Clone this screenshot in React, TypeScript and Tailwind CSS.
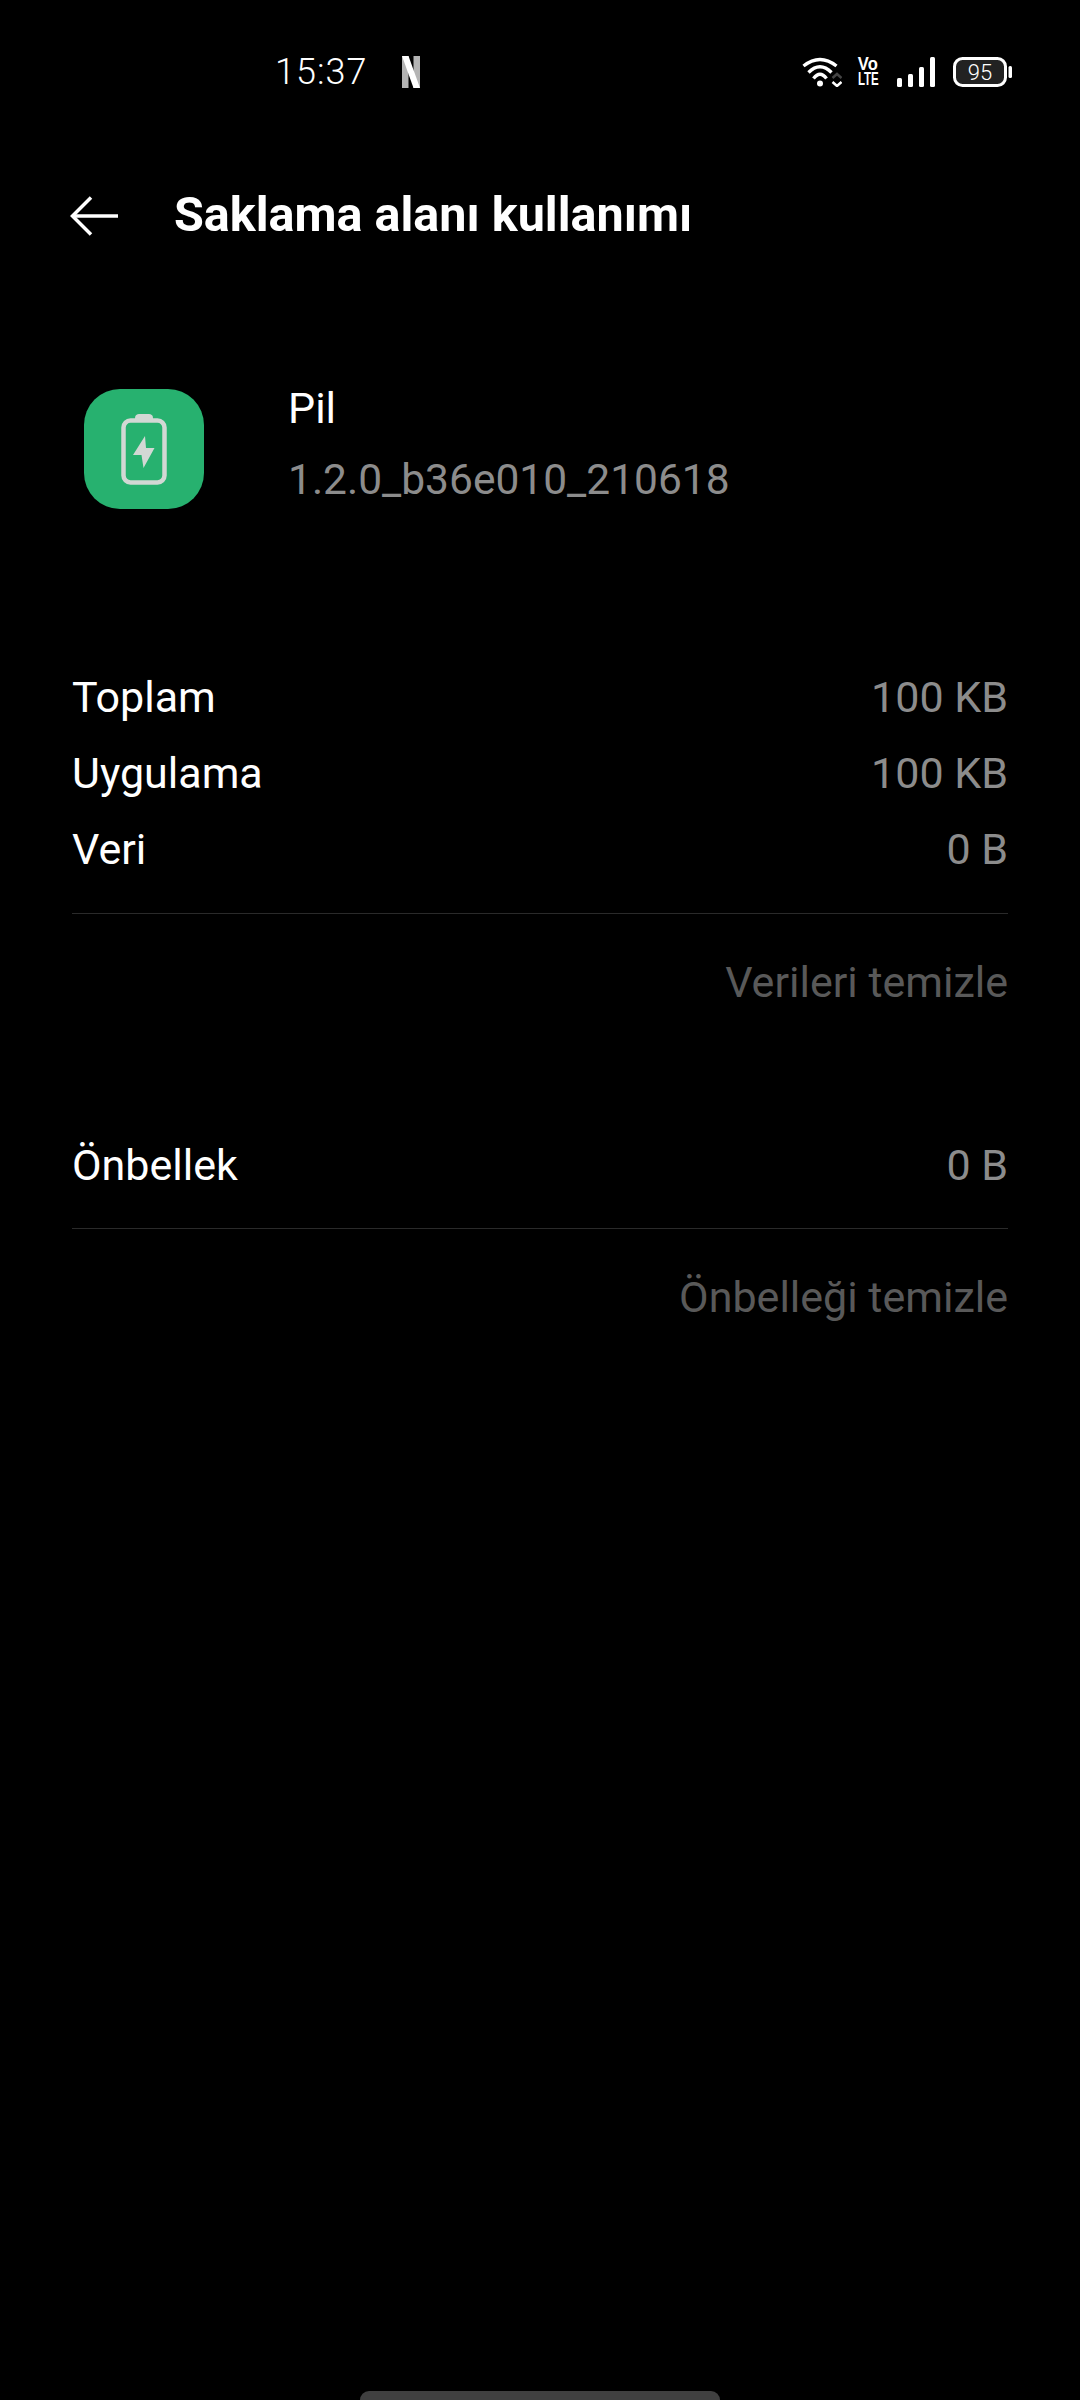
export default function App() {
  const font = { fontFamily: 'Roboto, sans-serif' };
  const Row = ({ l, r }: { l: string; r: string }) => (
    <div className="flex h-[76px] items-center justify-between">
      <span className="text-[43px] text-white">{l}</span>
      <span className="text-[43px] text-[#8c8c8c]">{r}</span>
    </div>
  );
  return (
    <div style={font} className="flex h-[2400px] w-[1080px] flex-col overflow-hidden bg-black">
      <div className="flex h-[144px] items-center pl-[275px] pr-[68px]">
        <span className="text-[36px] font-light leading-none tracking-[1px] text-white">15:37</span>
        <svg className="ml-[35px]" width="18" height="32" viewBox="0 0 18 32">
          <rect x="0" y="0" width="6.500" height="32" fill="#b4b4b4" />
          <rect x="11.500" y="0" width="6.500" height="32" fill="#b4b4b4" />
          <polygon points="0,0 6.500,0 18,32 11.500,32" fill="#fff" />
        </svg>
        <div className="ml-auto flex items-center">
          <svg width="40" height="30" viewBox="0 0 40 30" fill="none">
            <path d="M1.500 9Q18 -4 34.500 9" stroke="#fff" strokeWidth="3.400" />
            <path d="M6.500 15.500Q18 4 29.500 15.500" stroke="#fff" strokeWidth="3.400" />
            <path d="M11.500 21.500Q18 13 24.500 21.500" stroke="#fff" strokeWidth="3.400" />
            <circle cx="18" cy="26.500" r="3" fill="#fff" />
            <path d="M30.500 21L35 17L39.500 21" stroke="#444" strokeWidth="2.500" />
            <path d="M30.500 25L35 29L39.500 25" stroke="#fff" strokeWidth="2.500" />
          </svg>
          <div className="ml-[15px] flex h-[30px] w-[22px] flex-col items-center text-[18px] font-bold leading-[15px] text-white" style={{ fontFamily: '"Liberation Sans", sans-serif' }}>
            <span className="h-[15px] scale-x-[0.92]">Vo</span>
            <span className="h-[15px] scale-x-[0.64]">LTE</span>
          </div>
          <svg className="ml-[18px]" width="38" height="30" viewBox="0 0 38 30" fill="#fff">
            <rect x="0" y="21" width="5" height="9" rx="1.500" />
            <rect x="11" y="17" width="5" height="13" rx="1.500" />
            <rect x="22" y="10" width="5" height="20" rx="1.500" />
            <rect x="33" y="0" width="5" height="30" rx="1.500" />
          </svg>
          <svg className="ml-[18px]" width="59" height="30" viewBox="0 0 59 30">
            <rect x="1.500" y="1.500" width="51" height="27" rx="8" fill="#222" stroke="#fff" strokeWidth="3" />
            <rect x="55.500" y="9" width="3.500" height="12" rx="1.500" fill="#fff" />
            <text x="27" y="23" textAnchor="middle" fontSize="22" fontWeight="300" fill="#fff" fontFamily="Roboto, sans-serif">95</text>
          </svg>
        </div>
      </div>

      <div className="flex h-[143px] items-center pl-[70px]">
        <svg width="48" height="40" viewBox="0 0 48 40" fill="none" stroke="#fff" strokeWidth="3.500">
          <path d="M48 20H2" />
          <path d="M21 1.500L2.500 20L21 38.500" />
        </svg>
        <span className="mb-[1px] ml-[56px] text-[48.500px] font-bold leading-none text-white">Saklama alanı kullanımı</span>
      </div>

      <div className="mt-[102px] flex h-[120px] items-center pl-[84px]">
        <div className="flex h-[120px] w-[120px] items-center justify-center rounded-[36px] bg-[#27b16f]">
          <svg width="46" height="72" viewBox="0 0 46 72" fill="none">
            <path d="M14 5C14 2 16 1 18 1H28C30 1 32 2 32 5V7H14Z" fill="#d2d8d4" />
            <rect x="2.500" y="7.500" width="41" height="62" rx="7" stroke="#d2d8d4" strokeWidth="4.500" />
            <path d="M24 23L12 42H20.500L22.500 55L33.500 35H25Z" fill="#d2d8d4" />
          </svg>
        </div>
        <div className="mb-[11px] ml-[84px] flex flex-col">
          <span className="text-[43px] leading-[50px] text-white">Pil</span>
          <span className="mt-[22px] text-[42.500px] leading-[50px] text-[#8c8c8c]">1.2.0_b36e010_210618</span>
        </div>
      </div>

      <div className="mx-[72px] mt-[150px] flex flex-col">
        <Row l="Toplam" r="100 KB" />
        <Row l="Uygulama" r="100 KB" />
        <Row l="Veri" r="0 B" />
        <div className="mt-[26px] h-px bg-[#2a2a2a]" />
        <div className="mt-[43px] text-right text-[43px] leading-[50px] text-[#595959]">Verileri temizle</div>
        <div className="mt-[120px]"><Row l="Önbellek" r="0 B" /></div>
        <div className="mt-[25px] h-px bg-[#2a2a2a]" />
        <div className="mt-[43px] text-right text-[43px] leading-[50px] text-[#595959]">Önbelleği temizle</div>
      </div>

      <div className="mt-auto flex justify-center">
        <div className="h-[9px] w-[360px] rounded-t-full bg-[#404040]" />
      </div>
    </div>
  );
}
